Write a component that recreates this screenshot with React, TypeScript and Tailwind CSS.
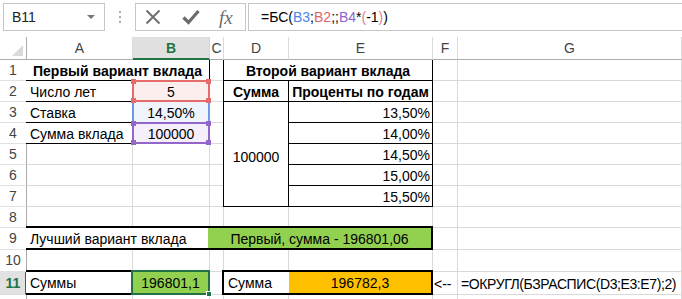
import type { ReactNode } from 'react'

const font = "font-['Liberation_Sans',Arial,sans-serif]"

const COLS = ['A', 'B', 'C', 'D', 'E', 'F', 'G']
const COL_START = ['col-start-2', 'col-start-3', 'col-start-4', 'col-start-5', 'col-start-6', 'col-start-7', 'col-start-8']
const ROW_START = [
  'row-start-2', 'row-start-3', 'row-start-4', 'row-start-5', 'row-start-6', 'row-start-7',
  'row-start-8', 'row-start-9', 'row-start-10', 'row-start-11', 'row-start-12', 'row-start-13',
]

function Handle({ className }: { className: string }) {
  return <div className={`absolute h-[5px] w-[5px] ${className}`} />
}

function FormulaBar() {
  return (
    <div className="flex h-[37px] items-start bg-white pt-[3px]">
      <div className="ml-[3px] flex h-[28px] w-[102px] items-center justify-between border border-[#c6c6c6] pl-[8px] pr-[9px]">
        <span className="text-[14px] text-[#222]">B11</span>
        <span className="h-0 w-0 border-x-[4px] border-t-[4px] border-x-transparent border-t-[#777]" />
      </div>
      <div className="flex w-[30px] flex-col items-center gap-[3px] pt-[8px]">
        <span className="h-[2px] w-[2px] bg-[#aaa]" />
        <span className="h-[2px] w-[2px] bg-[#aaa]" />
        <span className="h-[2px] w-[2px] bg-[#aaa]" />
      </div>
      <div className="flex h-[28px] w-[111px] items-center border border-[#c6c6c6]">
        <svg width="16" height="16" viewBox="0 0 16 16" className="ml-[9px]">
          <path d="M1.5 1.5 L14.5 14.5 M14.5 1.5 L1.5 14.5" stroke="#6b6b6b" strokeWidth="1.8" />
        </svg>
        <svg width="18" height="16" viewBox="0 0 18 16" className="ml-[21px]">
          <path d="M1.5 8.5 L6.5 13.5 L16.5 2" stroke="#6b6b6b" strokeWidth="3.2" fill="none" />
        </svg>
        <span className="ml-[19px] font-['Liberation_Serif',serif] text-[19px] italic leading-none text-[#6b6b6b]">
          fx
        </span>
      </div>
      <div className="ml-[2px] flex h-[28px] flex-1 items-center border border-r-0 border-[#c6c6c6] pl-[12px] text-[14px] text-black">
        <span>=БС(</span>
        <span className="text-[#4a86e8]">B3</span>
        <span>;</span>
        <span className="text-[#e06666]">B2</span>
        <span>;;</span>
        <span className="text-[#8e63ce]">B4</span>
        <span>*</span>
        <span className="text-[#e8778f]">(</span>
        <span>-1</span>
        <span className="text-[#e8778f]">)</span>
        <span>)</span>
      </div>
    </div>
  )
}

function Box({ className, children }: { className: string; children?: ReactNode }) {
  return <div className={`relative flex min-w-0 items-center whitespace-nowrap ${className}`}>{children}</div>
}

export default function App() {
  const rows = Array.from({ length: 12 }, (_, i) => i)

  return (
    <div className={`h-[299px] w-[682px] overflow-hidden bg-white text-[14px] text-black ${font}`}>
      <FormulaBar />
      <div className="grid grid-cols-[27px_106px_77px_14px_65px_144px_25px_1fr] grid-rows-[23px_repeat(8,21px)_22px_22px_23px_30px]">
        {/* corner */}
        <div className="col-start-1 row-start-1 flex items-end justify-end border-r border-b border-[#ababab] pb-[3px] pr-[3px]">
          <span className="h-0 w-0 border-b-[11px] border-l-[11px] border-b-[#dadada] border-l-transparent" />
        </div>
        {/* column headers */}
        {COLS.map((c, i) =>
          c === 'B' ? (
            <div
              key={c}
              className={`${COL_START[i]} row-start-1 flex items-center justify-center border-r border-b-2 border-r-[#d4d4d4] border-b-[#217346] bg-[#e1e1e1] pt-[2px] font-bold text-[#217346]`}
            >
              {c}
            </div>
          ) : (
            <div
              key={c}
              className={`${COL_START[i]} row-start-1 flex items-center justify-center border-r border-b border-r-[#dadada] border-b-[#ababab] pt-[1px] text-[#444]`}
            >
              {c}
            </div>
          ),
        )}
        {/* row headers */}
        {rows.map((r) =>
          r === 10 ? (
            <div
              key={r}
              className={`col-start-1 ${ROW_START[r]} flex items-center justify-center border-r-2 border-b border-r-[#217346] border-b-[#dadada] bg-[#e1e1e1] pl-[1px] font-bold text-[#217346]`}
            >
              {r + 1}
            </div>
          ) : (
            <div
              key={r}
              className={`col-start-1 ${ROW_START[r]} flex items-center justify-center border-r border-b border-r-[#ababab] border-b-[#e1e1e1] text-[#444]`}
            >
              {r < 11 ? r + 1 : null}
            </div>
          ),
        )}
        {/* gridlines */}
        {rows.map((r) =>
          COLS.map((c, i) => (
            <div key={`${r}${c}`} className={`${COL_START[i]} ${ROW_START[r]} border-r border-b border-[#d9d9d9]`} />
          )),
        )}

        {/* first table */}
        <Box className="col-start-2 col-span-2 row-start-2 -ml-px justify-center border-r border-b border-black bg-white pt-[2px] font-bold">
          Первый вариант вклада
        </Box>
        <Box className="col-start-2 row-start-3 -ml-px border-b border-black bg-white pl-[4px] pt-[2px]">Число лет</Box>
        <Box className="col-start-2 row-start-4 -ml-px border-b border-black bg-white pl-[4px] pt-[2px]">Ставка</Box>
        <Box className="col-start-2 row-start-5 -ml-px border-b border-black bg-white pl-[4px] pt-[2px]">Сумма вклада</Box>

        {/* referenced cells */}
        <Box className="col-start-3 row-start-4 -ml-px -mt-px justify-center border-x-2 border-[#6f9ae6] bg-[#eef3fc] pt-[2px]">
          14,50%
        </Box>
        <Box className="col-start-3 row-start-3 -ml-px -mt-px justify-center border-2 border-[#e66b6b] bg-[#fdeeee] pt-[2px]">
          5
          <Handle className="-left-[3px] -top-[3px] bg-[#e66b6b]" />
          <Handle className="-right-[3px] -top-[3px] bg-[#e66b6b]" />
          <Handle className="-bottom-[3px] -left-[3px] bg-[#e66b6b]" />
          <Handle className="-bottom-[3px] -right-[3px] bg-[#e66b6b]" />
        </Box>
        <Box className="col-start-3 row-start-5 -ml-px -mt-px justify-center border-2 border-[#9366cc] bg-[#f4effa] pt-[2px]">
          100000
          <Handle className="-left-[3px] -top-[3px] bg-[#9366cc]" />
          <Handle className="-right-[3px] -top-[3px] bg-[#9366cc]" />
          <Handle className="-bottom-[3px] -left-[3px] bg-[#9366cc]" />
          <Handle className="-bottom-[3px] -right-[3px] bg-[#9366cc]" />
        </Box>

        {/* second table */}
        <Box className="col-start-5 col-span-2 row-start-2 -ml-px justify-center border-x border-b border-black bg-white pt-[2px] font-bold">
          Второй вариант вклада
        </Box>
        <Box className="col-start-5 row-start-3 -ml-px justify-center border-x border-b border-black bg-white pt-[2px] font-bold">
          Сумма
        </Box>
        <Box className="col-start-6 row-start-3 justify-center border-r border-b border-black bg-white pt-[2px] font-bold">
          Проценты по годам
        </Box>
        <Box className="col-start-5 row-start-4 row-span-5 -ml-px justify-center border-x border-b border-black bg-white pt-[6px]">
          100000
        </Box>
        {['13,50%', '14,00%', '14,50%', '15,00%', '15,50%'].map((v, i) => (
          <Box
            key={v}
            className={`col-start-6 ${ROW_START[i + 2]} justify-end border-r border-b border-black bg-white pr-[2px] pt-[2px]`}
          >
            {v}
          </Box>
        ))}

        {/* row 9 */}
        <Box className="col-start-2 col-span-2 row-start-10 -ml-px -mt-[2px] border-y-2 border-black bg-white pl-[4px] pt-[2px]">
          Лучший вариант вклада
        </Box>
        <Box className="col-start-4 col-span-3 row-start-10 -ml-[2px] -mt-[2px] justify-center border-y-2 border-r-2 border-black bg-[#92d050] pt-[2px]">
          Первый, сумма - 196801,06
        </Box>

        {/* row 11 */}
        <Box className="col-start-2 row-start-12 -mt-[2px] -ml-px border-y-2 border-black bg-white pl-[4px] pt-[2px]">
          Суммы
        </Box>
        <Box className="col-start-3 row-start-12 -ml-[2px] -mt-[2px] justify-center border-2 border-[#217346] bg-[#92d050] pt-[2px]">
          196801,1
          <div className="absolute -bottom-[4px] -right-[4px] h-[6px] w-[6px] border border-white bg-[#217346]" />
        </Box>
        <Box className="col-start-5 row-start-12 -ml-[2px] -mt-[2px] border-y-2 border-l-2 border-black bg-white pl-[4px] pt-[2px]">
          Сумма
        </Box>
        <Box className="col-start-6 row-start-12 -mt-[2px] justify-center border-y-2 border-r-2 border-black bg-[#ffc000] pt-[2px]">
          196782,3
        </Box>
        <Box className="col-start-7 row-start-12 pl-[1px] pt-[2px]">&lt;--</Box>
        <Box className="col-start-8 row-start-12 pl-[3px] pt-[2px] tracking-[-0.4px]">=ОКРУГЛ(БЗРАСПИС(D3;E3:E7);2)</Box>
      </div>
    </div>
  )
}
